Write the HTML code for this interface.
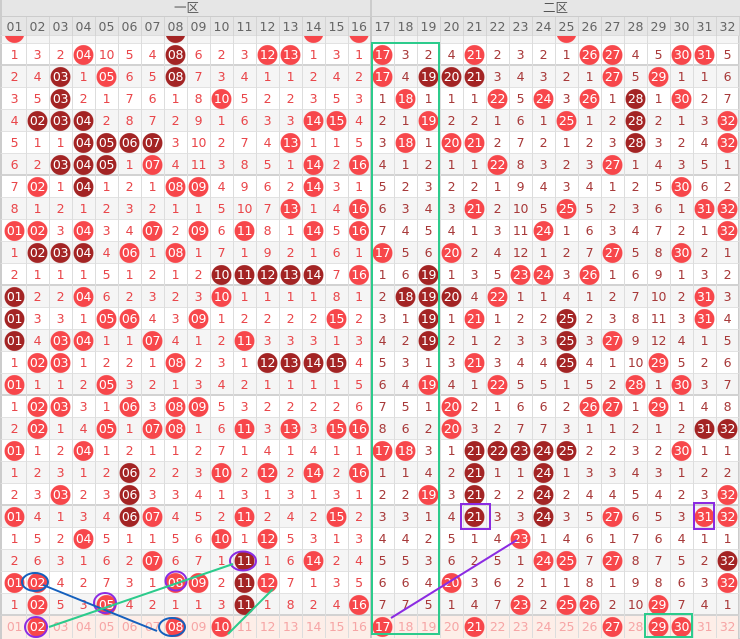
<!DOCTYPE html>
<html><head><meta charset="utf-8">
<style>
*{margin:0;padding:0;box-sizing:border-box}
html,body{width:740px;height:639px;overflow:hidden;background:#fff}
body{position:relative;font-family:"DejaVu Sans","Liberation Sans","Noto Sans CJK SC",sans-serif}
.w{position:absolute;left:0;width:740px;height:22px;display:grid;grid-template-columns:repeat(32,23px);padding-left:2px;border-left:2px solid #ccc;border-right:2px solid #ccc;border-bottom:1px solid #e2e2e2}
.w.g{background:#f5f5f5}
.w.k{border-bottom:2px solid #d2d2d2}
.w.p{background:#fdeee8}
.w i{font-style:normal;display:block;height:22px;line-height:22px;text-align:center;font-size:12.5px;color:#e9474b;border-right:1px solid #ddd;margin-left:-1px;letter-spacing:-0.3px}
.w i:nth-child(n+17){color:#a83a3a}
.w i:nth-child(16){border-right:2px solid #c8c8c8}
.w.p i{color:#f6a6a6}
.w i.r,.w.p i.r{color:#fff;background:radial-gradient(circle at 50% 50%,#f7474b 0,#f7474b 9.6px,transparent 10.3px)}
.w i.d,.w.p i.d{color:#fff;background:radial-gradient(circle at 50% 50%,#a32424 0,#a32424 9.6px,transparent 10.3px)}
#h1{position:absolute;left:0;top:0;width:740px;height:17px;background:#e6e6e6;border-bottom:1px solid #ccc;font-size:12.5px;color:#555;z-index:5;border-left:2px solid #ccc}
#h1 span{position:absolute;top:0;line-height:16px}
#h2{position:absolute;left:0;top:17px;width:740px;height:19px;background:#e6e6e6;display:grid;grid-template-columns:repeat(32,23px);padding-left:2px;border-left:2px solid #ccc;z-index:5;border-bottom:1px solid #ddd}
#h2 i{font-style:normal;text-align:center;line-height:19px;font-size:12.5px;color:#666;border-right:1px solid #d4d4d4;margin-left:-1px}
#h2 i:nth-child(16){border-right:2px solid #c8c8c8}
svg{position:absolute;left:0;top:0;z-index:10}
</style></head><body>
<div id="h1"><span style="left:172px">一区</span><span style="left:541px;border-left:none">二区</span><div style="position:absolute;left:368px;top:0;width:2px;height:17px;background:#ccc"></div></div>
<div id="h2"><i>01</i><i>02</i><i>03</i><i>04</i><i>05</i><i>06</i><i>07</i><i>08</i><i>09</i><i>10</i><i>11</i><i>12</i><i>13</i><i>14</i><i>15</i><i>16</i><i>17</i><i>18</i><i>19</i><i>20</i><i>21</i><i>22</i><i>23</i><i>24</i><i>25</i><i>26</i><i>27</i><i>28</i><i>29</i><i>30</i><i>31</i><i>32</i></div>

<div class="w g" style="top:21.5px"><i class=r></i><i></i><i></i><i></i><i></i><i></i><i></i><i class=d></i><i></i><i></i><i></i><i></i><i></i><i class=r></i><i></i><i class=r></i><i></i><i></i><i></i><i></i><i></i><i></i><i></i><i></i><i class=r></i><i></i><i></i><i></i><i></i><i></i><i></i><i></i></div>

<div class="w k" style="top:43.5px"><i>1</i><i>3</i><i>2</i><i class=r>04</i><i>10</i><i>5</i><i>4</i><i class=d>08</i><i>6</i><i>2</i><i>3</i><i class=r>12</i><i class=r>13</i><i>1</i><i>3</i><i>1</i><i class=r>17</i><i>3</i><i>2</i><i>4</i><i class=r>21</i><i>2</i><i>3</i><i>2</i><i>1</i><i class=r>26</i><i class=r>27</i><i>4</i><i>5</i><i class=r>30</i><i class=r>31</i><i>5</i></div>
<div class="w g" style="top:65.5px"><i>2</i><i>4</i><i class=d>03</i><i>1</i><i class=r>05</i><i>6</i><i>5</i><i class=d>08</i><i>7</i><i>3</i><i>4</i><i>1</i><i>1</i><i>2</i><i>4</i><i>2</i><i class=r>17</i><i>4</i><i class=d>19</i><i class=d>20</i><i class=d>21</i><i>3</i><i>4</i><i>3</i><i>2</i><i>1</i><i class=r>27</i><i>5</i><i class=r>29</i><i>1</i><i>1</i><i>6</i></div>
<div class="w" style="top:87.5px"><i>3</i><i>5</i><i class=d>03</i><i>2</i><i>1</i><i>7</i><i>6</i><i>1</i><i>8</i><i class=r>10</i><i>5</i><i>2</i><i>2</i><i>3</i><i>5</i><i>3</i><i>1</i><i class=r>18</i><i>1</i><i>1</i><i>1</i><i class=r>22</i><i>5</i><i class=r>24</i><i>3</i><i class=r>26</i><i>1</i><i class=d>28</i><i>1</i><i class=r>30</i><i>2</i><i>7</i></div>
<div class="w g" style="top:109.5px"><i>4</i><i class=d>02</i><i class=d>03</i><i class=d>04</i><i>2</i><i>8</i><i>7</i><i>2</i><i>9</i><i>1</i><i>6</i><i>3</i><i>3</i><i class=r>14</i><i class=r>15</i><i>4</i><i>2</i><i>1</i><i class=r>19</i><i>2</i><i>2</i><i>1</i><i>6</i><i>1</i><i class=r>25</i><i>1</i><i>2</i><i class=d>28</i><i>2</i><i>1</i><i>3</i><i class=r>32</i></div>
<div class="w" style="top:131.5px"><i>5</i><i>1</i><i>1</i><i class=d>04</i><i class=d>05</i><i class=d>06</i><i class=d>07</i><i>3</i><i>10</i><i>2</i><i>7</i><i>4</i><i class=r>13</i><i>1</i><i>1</i><i>5</i><i>3</i><i class=r>18</i><i>1</i><i class=r>20</i><i class=r>21</i><i>2</i><i>7</i><i>2</i><i>1</i><i>2</i><i>3</i><i class=d>28</i><i>3</i><i>2</i><i>4</i><i class=r>32</i></div>
<div class="w g k" style="top:153.5px"><i>6</i><i>2</i><i class=d>03</i><i class=d>04</i><i class=d>05</i><i>1</i><i class=r>07</i><i>4</i><i>11</i><i>3</i><i>8</i><i>5</i><i>1</i><i class=r>14</i><i>2</i><i class=r>16</i><i>4</i><i>1</i><i>2</i><i>1</i><i>1</i><i class=r>22</i><i>8</i><i>3</i><i>2</i><i>3</i><i class=r>27</i><i>1</i><i>4</i><i>3</i><i>5</i><i>1</i></div>
<div class="w" style="top:175.5px"><i>7</i><i class=r>02</i><i>1</i><i class=d>04</i><i>1</i><i>2</i><i>1</i><i class=r>08</i><i class=r>09</i><i>4</i><i>9</i><i>6</i><i>2</i><i class=r>14</i><i>3</i><i>1</i><i>5</i><i>2</i><i>3</i><i>2</i><i>2</i><i>1</i><i>9</i><i>4</i><i>3</i><i>4</i><i>1</i><i>2</i><i>5</i><i class=r>30</i><i>6</i><i>2</i></div>
<div class="w g" style="top:197.5px"><i>8</i><i>1</i><i>2</i><i>1</i><i>2</i><i>3</i><i>2</i><i>1</i><i>1</i><i>5</i><i>10</i><i>7</i><i class=r>13</i><i>1</i><i>4</i><i class=r>16</i><i>6</i><i>3</i><i>4</i><i>3</i><i class=r>21</i><i>2</i><i>10</i><i>5</i><i class=r>25</i><i>5</i><i>2</i><i>3</i><i>6</i><i>1</i><i class=r>31</i><i class=r>32</i></div>
<div class="w" style="top:219.5px"><i class=r>01</i><i class=r>02</i><i>3</i><i class=r>04</i><i>3</i><i>4</i><i class=r>07</i><i>2</i><i class=r>09</i><i>6</i><i class=r>11</i><i>8</i><i>1</i><i class=r>14</i><i>5</i><i class=r>16</i><i>7</i><i>4</i><i>5</i><i>4</i><i>1</i><i>3</i><i>11</i><i class=r>24</i><i>1</i><i>6</i><i>3</i><i>4</i><i>7</i><i>2</i><i>1</i><i class=r>32</i></div>
<div class="w g" style="top:241.5px"><i>1</i><i class=d>02</i><i class=d>03</i><i class=d>04</i><i>4</i><i class=r>06</i><i>1</i><i class=r>08</i><i>1</i><i>7</i><i>1</i><i>9</i><i>2</i><i>1</i><i>6</i><i>1</i><i class=r>17</i><i>5</i><i>6</i><i class=r>20</i><i>2</i><i>4</i><i>12</i><i>1</i><i>2</i><i>7</i><i class=r>27</i><i>5</i><i>8</i><i class=r>30</i><i>2</i><i>1</i></div>
<div class="w k" style="top:263.5px"><i>2</i><i>1</i><i>1</i><i>1</i><i>5</i><i>1</i><i>2</i><i>1</i><i>2</i><i class=d>10</i><i class=d>11</i><i class=d>12</i><i class=d>13</i><i class=d>14</i><i>7</i><i class=r>16</i><i>1</i><i>6</i><i class=d>19</i><i>1</i><i>3</i><i>5</i><i class=r>23</i><i class=r>24</i><i>3</i><i class=r>26</i><i>1</i><i>6</i><i>9</i><i>1</i><i>3</i><i>2</i></div>
<div class="w g" style="top:285.5px"><i class=d>01</i><i>2</i><i>2</i><i class=r>04</i><i>6</i><i>2</i><i>3</i><i>2</i><i>3</i><i class=r>10</i><i>1</i><i>1</i><i>1</i><i>1</i><i>8</i><i>1</i><i>2</i><i class=d>18</i><i class=d>19</i><i class=d>20</i><i>4</i><i class=r>22</i><i>1</i><i>1</i><i>4</i><i>1</i><i>2</i><i>7</i><i>10</i><i>2</i><i class=r>31</i><i>3</i></div>
<div class="w" style="top:307.5px"><i class=d>01</i><i>3</i><i>3</i><i>1</i><i class=r>05</i><i class=r>06</i><i>4</i><i>3</i><i class=r>09</i><i>1</i><i>2</i><i>2</i><i>2</i><i>2</i><i class=r>15</i><i>2</i><i>3</i><i>1</i><i class=d>19</i><i>1</i><i class=r>21</i><i>1</i><i>2</i><i>2</i><i class=d>25</i><i>2</i><i>3</i><i>8</i><i>11</i><i>3</i><i class=r>31</i><i>4</i></div>
<div class="w g" style="top:329.5px"><i class=d>01</i><i>4</i><i class=r>03</i><i class=r>04</i><i>1</i><i>1</i><i class=r>07</i><i>4</i><i>1</i><i>2</i><i class=r>11</i><i>3</i><i>3</i><i>3</i><i>1</i><i>3</i><i>4</i><i>2</i><i class=d>19</i><i>2</i><i>1</i><i>2</i><i>3</i><i>3</i><i class=d>25</i><i>3</i><i class=r>27</i><i>9</i><i>12</i><i>4</i><i>1</i><i>5</i></div>
<div class="w" style="top:351.5px"><i>1</i><i class=r>02</i><i class=r>03</i><i>1</i><i>2</i><i>2</i><i>1</i><i class=r>08</i><i>2</i><i>3</i><i>1</i><i class=d>12</i><i class=d>13</i><i class=d>14</i><i class=d>15</i><i>4</i><i>5</i><i>3</i><i>1</i><i>3</i><i class=r>21</i><i>3</i><i>4</i><i>4</i><i class=d>25</i><i>4</i><i>1</i><i>10</i><i class=r>29</i><i>5</i><i>2</i><i>6</i></div>
<div class="w g k" style="top:373.5px"><i class=r>01</i><i>1</i><i>1</i><i>2</i><i class=r>05</i><i>3</i><i>2</i><i>1</i><i>3</i><i>4</i><i>2</i><i>1</i><i>1</i><i>1</i><i>1</i><i>5</i><i>6</i><i>4</i><i class=r>19</i><i>4</i><i>1</i><i class=r>22</i><i>5</i><i>5</i><i>1</i><i>5</i><i>2</i><i class=r>28</i><i>1</i><i class=r>30</i><i>3</i><i>7</i></div>
<div class="w" style="top:395.5px"><i>1</i><i class=r>02</i><i class=r>03</i><i>3</i><i>1</i><i class=r>06</i><i>3</i><i class=r>08</i><i class=r>09</i><i>5</i><i>3</i><i>2</i><i>2</i><i>2</i><i>2</i><i>6</i><i>7</i><i>5</i><i>1</i><i class=r>20</i><i>2</i><i>1</i><i>6</i><i>6</i><i>2</i><i class=r>26</i><i class=r>27</i><i>1</i><i class=r>29</i><i>1</i><i>4</i><i>8</i></div>
<div class="w g" style="top:417.5px"><i>2</i><i class=r>02</i><i>1</i><i>4</i><i class=r>05</i><i>1</i><i class=r>07</i><i class=r>08</i><i>1</i><i>6</i><i class=r>11</i><i>3</i><i class=r>13</i><i>3</i><i class=r>15</i><i class=r>16</i><i>8</i><i>6</i><i>2</i><i class=r>20</i><i>3</i><i>2</i><i>7</i><i>7</i><i>3</i><i>1</i><i>1</i><i>2</i><i>1</i><i>2</i><i class=d>31</i><i class=d>32</i></div>
<div class="w" style="top:439.5px"><i class=r>01</i><i>1</i><i>2</i><i class=r>04</i><i>1</i><i>2</i><i>1</i><i>1</i><i>2</i><i>7</i><i>1</i><i>4</i><i>1</i><i>4</i><i>1</i><i>1</i><i class=r>17</i><i class=r>18</i><i>3</i><i>1</i><i class=d>21</i><i class=d>22</i><i class=d>23</i><i class=d>24</i><i class=d>25</i><i>2</i><i>2</i><i>3</i><i>2</i><i class=r>30</i><i>1</i><i>1</i></div>
<div class="w g" style="top:461.5px"><i>1</i><i>2</i><i>3</i><i>1</i><i>2</i><i class=d>06</i><i>2</i><i>2</i><i>3</i><i class=r>10</i><i>2</i><i class=r>12</i><i>2</i><i class=r>14</i><i>2</i><i class=r>16</i><i>1</i><i>1</i><i>4</i><i>2</i><i class=d>21</i><i>1</i><i>1</i><i class=d>24</i><i>1</i><i>3</i><i>3</i><i>4</i><i>3</i><i>1</i><i>2</i><i>2</i></div>
<div class="w k" style="top:483.5px"><i>2</i><i>3</i><i class=r>03</i><i>2</i><i>3</i><i class=d>06</i><i>3</i><i>3</i><i>4</i><i>1</i><i>3</i><i>1</i><i>3</i><i>1</i><i>3</i><i>1</i><i>2</i><i>2</i><i class=r>19</i><i>3</i><i class=d>21</i><i>2</i><i>2</i><i class=d>24</i><i>2</i><i>4</i><i>4</i><i>5</i><i>4</i><i>2</i><i>3</i><i class=r>32</i></div>
<div class="w g" style="top:505.5px"><i class=r>01</i><i>4</i><i>1</i><i>3</i><i>4</i><i class=d>06</i><i class=r>07</i><i>4</i><i>5</i><i>2</i><i class=r>11</i><i>2</i><i>4</i><i>2</i><i class=r>15</i><i>2</i><i>3</i><i>3</i><i>1</i><i>4</i><i class=d>21</i><i>3</i><i>3</i><i class=d>24</i><i>3</i><i>5</i><i class=r>27</i><i>6</i><i>5</i><i>3</i><i class=r>31</i><i class=r>32</i></div>
<div class="w" style="top:527.5px"><i>1</i><i>5</i><i>2</i><i class=r>04</i><i>5</i><i>1</i><i>1</i><i>5</i><i>6</i><i class=r>10</i><i>1</i><i class=r>12</i><i>5</i><i>3</i><i>1</i><i>3</i><i>4</i><i>4</i><i>2</i><i>5</i><i>1</i><i>4</i><i class=r>23</i><i>1</i><i>4</i><i>6</i><i>1</i><i>7</i><i>6</i><i>4</i><i>1</i><i>1</i></div>
<div class="w g" style="top:549.5px"><i>2</i><i>6</i><i>3</i><i>1</i><i>6</i><i>2</i><i class=r>07</i><i>6</i><i>7</i><i>1</i><i class=d>11</i><i>1</i><i>6</i><i class=r>14</i><i>2</i><i>4</i><i>5</i><i>5</i><i>3</i><i>6</i><i>2</i><i>5</i><i>1</i><i class=r>24</i><i class=r>25</i><i>7</i><i class=r>27</i><i>8</i><i>7</i><i>5</i><i>2</i><i class=d>32</i></div>
<div class="w" style="top:571.5px"><i class=r>01</i><i class=r>02</i><i>4</i><i>2</i><i>7</i><i>3</i><i>1</i><i class=r>08</i><i class=r>09</i><i>2</i><i class=d>11</i><i class=r>12</i><i>7</i><i>1</i><i>3</i><i>5</i><i>6</i><i>6</i><i>4</i><i class=r>20</i><i>3</i><i>6</i><i>2</i><i>1</i><i>1</i><i>8</i><i>1</i><i>9</i><i>8</i><i>6</i><i>3</i><i class=r>32</i></div>
<div class="w g k" style="top:593.5px"><i>1</i><i class=r>02</i><i>5</i><i>3</i><i class=r>05</i><i>4</i><i>2</i><i>1</i><i>1</i><i>3</i><i class=d>11</i><i>1</i><i>8</i><i>2</i><i>4</i><i class=r>16</i><i>7</i><i>7</i><i>5</i><i>1</i><i>4</i><i>7</i><i class=r>23</i><i>2</i><i class=r>25</i><i class=r>26</i><i>2</i><i>10</i><i class=r>29</i><i>7</i><i>4</i><i>1</i></div>
<div class="w p" style="top:615.5px;height:24px"><i>01</i><i class=r>02</i><i>03</i><i>04</i><i>05</i><i>06</i><i>07</i><i class=r>08</i><i>09</i><i class=r>10</i><i>11</i><i>12</i><i>13</i><i>14</i><i>15</i><i>16</i><i class=r>17</i><i>18</i><i>19</i><i>20</i><i class=r>21</i><i>22</i><i>23</i><i>24</i><i>25</i><i>26</i><i class=r>27</i><i>28</i><i class=r>29</i><i class=r>30</i><i>31</i><i>32</i></div>

<svg width="740" height="639" viewBox="0 0 740 639">
<g fill="none" stroke-width="2">
<rect x="372" y="43" width="67" height="591" stroke="#2ccb8c"/>
<rect x="645" y="614" width="47" height="23" stroke="#2ccb8c"/>
<rect x="461" y="504" width="29" height="25" stroke="#8b2be2"/>
<rect x="694" y="503" width="20" height="26" stroke="#8b2be2"/>
<line x1="391" y1="618" x2="517" y2="540" stroke="#8b2be2"/>
<ellipse cx="243" cy="561" rx="13" ry="9.5" stroke="#8b2be2"/>
<ellipse cx="176" cy="581" rx="10.5" ry="9.5" stroke="#8b2be2"/>
<ellipse cx="105" cy="603" rx="11" ry="10" stroke="#8b2be2"/>
<ellipse cx="36" cy="627" rx="11" ry="10" stroke="#8b2be2"/>
<ellipse cx="35" cy="582" rx="13" ry="9" stroke="#1560bd"/>
<ellipse cx="172" cy="627" rx="13" ry="9" stroke="#1560bd"/>
<line x1="43" y1="585" x2="157" y2="631" stroke="#1560bd"/>
<line x1="49" y1="627" x2="233" y2="564" stroke="#2ccb8c"/>
<line x1="273" y1="589" x2="228" y2="634" stroke="#2ccb8c"/>
</g>
</svg>
</body></html>
